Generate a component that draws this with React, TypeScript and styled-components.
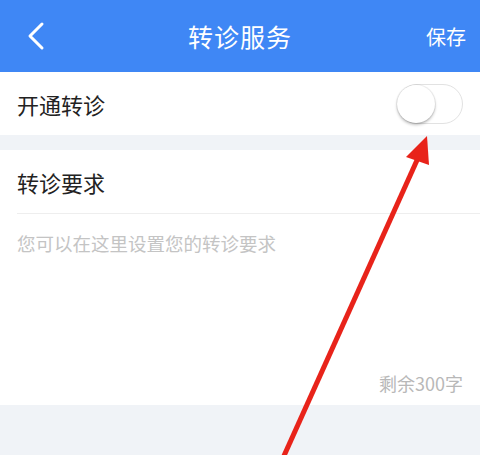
import React from 'react';
import styled, { createGlobalStyle } from 'styled-components';

const GlobalStyle = createGlobalStyle`
  html, body {
    margin: 0;
    padding: 0;
    background: #f0f3f7;
    font-family: "Noto Sans CJK SC", "Noto Sans", sans-serif;
  }
`;

const Page = styled.div`
  position: relative;
  width: 480px;
  height: 455px;
  overflow: hidden;
  background: #f0f3f7;
`;

const Header = styled.header`
  height: 72px;
  background: #3f87f5;
  display: grid;
  grid-template-columns: 80px 1fr 80px;
  align-items: center;
  color: #fff;
`;

const BackButton = styled.button`
  border: none;
  background: none;
  padding: 0 0 0 26px;
  display: flex;
  align-items: center;
  height: 100%;
`;

const Title = styled.h1`
  margin: 0;
  text-align: center;
  font-size: 25px;
  font-weight: 400;
  letter-spacing: 1px;
`;

const SaveButton = styled.button`
  border: none;
  background: none;
  color: #fff;
  font-family: inherit;
  font-size: 20px;
  padding: 0 14px 0 0;
  text-align: right;
`;

const Row = styled.div`
  height: 63px;
  background: #fff;
  display: flex;
  align-items: center;
  justify-content: space-between;
  padding: 0 17px;
`;

const Label = styled.span`
  font-size: 22px;
  color: #222;
`;

const Switch = styled.div<{ on: boolean }>`
  position: relative;
  width: 64px;
  height: 38px;
  border-radius: 20px;
  border: 1px solid #e2e2e2;
  background: ${(p) => (p.on ? '#3f87f5' : '#fff')};
`;

const Knob = styled.div<{ on: boolean }>`
  position: absolute;
  top: 0;
  left: ${(p) => (p.on ? '25px' : '-1px')};
  width: 38px;
  height: 38px;
  border-radius: 50%;
  background: #fff;
  box-shadow: 0 2px 3px rgba(0, 0, 0, 0.25), 0 0 0 1px rgba(0, 0, 0, 0.06);
`;

const Gap = styled.div`
  height: 15px;
`;

const Section = styled.section`
  background: #fff;
  padding-left: 17px;
`;

const SectionHead = styled.div`
  height: 63px;
  display: flex;
  align-items: center;
  border-bottom: 1px solid #eeeeee;
`;

const Body = styled.div`
  height: 191px;
  padding: 16px 17px 0 0;
  display: flex;
  flex-direction: column;
  justify-content: space-between;
  box-sizing: border-box;
`;

const Placeholder = styled.div`
  font-size: 18.5px;
  color: #c4c4c4;
`;

const Counter = styled.div`
  align-self: flex-end;
  font-size: 18px;
  color: #b8b8b8;
  padding-bottom: 9px;
`;

const Annotation = styled.svg`
  position: absolute;
  left: 0;
  top: 0;
  pointer-events: none;
`;

const App: React.FC = () => {
  const on = false;
  return (
    <Page>
      <GlobalStyle />
      <Header>
        <BackButton aria-label="返回">
          <svg width="20" height="30" viewBox="0 0 20 30">
            <path d="M16 3 L4 15 L16 27" fill="none" stroke="#fff" strokeWidth="3" strokeLinecap="round" strokeLinejoin="round" />
          </svg>
        </BackButton>
        <Title>转诊服务</Title>
        <SaveButton>保存</SaveButton>
      </Header>
      <Row>
        <Label>开通转诊</Label>
        <Switch on={on}>
          <Knob on={on} />
        </Switch>
      </Row>
      <Gap />
      <Section>
        <SectionHead>
          <Label>转诊要求</Label>
        </SectionHead>
        <Body>
          <Placeholder>您可以在这里设置您的转诊要求</Placeholder>
          <Counter>剩余300字</Counter>
        </Body>
      </Section>
      <Annotation width="480" height="455" viewBox="0 0 480 455">
        <line x1="283" y1="458" x2="418" y2="158" stroke="#e8231a" strokeWidth="5" />
        <polygon points="427,136 406,157 429,165" fill="#e8231a" />
      </Annotation>
    </Page>
  );
};

export default App;
